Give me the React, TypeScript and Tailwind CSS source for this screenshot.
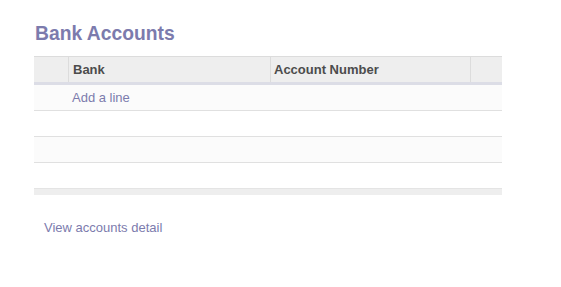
export default function App() {
  const font = { fontFamily: '"Liberation Sans", Arial, sans-serif' };
  return (
    <div className="w-[561px] h-[287px] bg-white" style={font}>
      <div className="pl-[34px] pt-[21px] w-[502px]">
        <h1 className="text-[19.3px] leading-[26px] font-bold text-[#7c7bad] pl-px">Bank Accounts</h1>
        <div className="mt-[9px] w-[468px]">
          <div className="flex h-[29px] bg-[#eeeeee] border-t border-[#dcdcdc] border-b-[3px] border-b-[#dcdde6] text-[13px] font-bold text-[#4c4c4c]">
            <div className="w-[35px] border-r border-[#dcdcdc]" />
            <div className="w-[202px] border-r border-[#dcdcdc] flex items-center pl-[4px]">Bank</div>
            <div className="w-[200px] border-r border-[#dcdcdc] flex items-center pl-[3px]">Account Number</div>
            <div className="flex-1" />
          </div>
          <div className="h-[26px] bg-[#fbfbfb] border-b border-[#e0e0e0] flex items-center pl-[38px] text-[13px] text-[#7c7bad]">
            Add a line
          </div>
          <div className="h-[26px] bg-white border-b border-[#e0e0e0]" />
          <div className="h-[26px] bg-[#fbfbfb] border-b border-[#e0e0e0]" />
          <div className="h-[25px] bg-white" />
          <div className="h-[7px] bg-[#eeeeee] border-t border-[#e4e4e4]" />
        </div>
        <div className="mt-[25px] pl-[10px] text-[13px] text-[#7c7bad] leading-[16px]">View accounts detail</div>
      </div>
    </div>
  );
}
